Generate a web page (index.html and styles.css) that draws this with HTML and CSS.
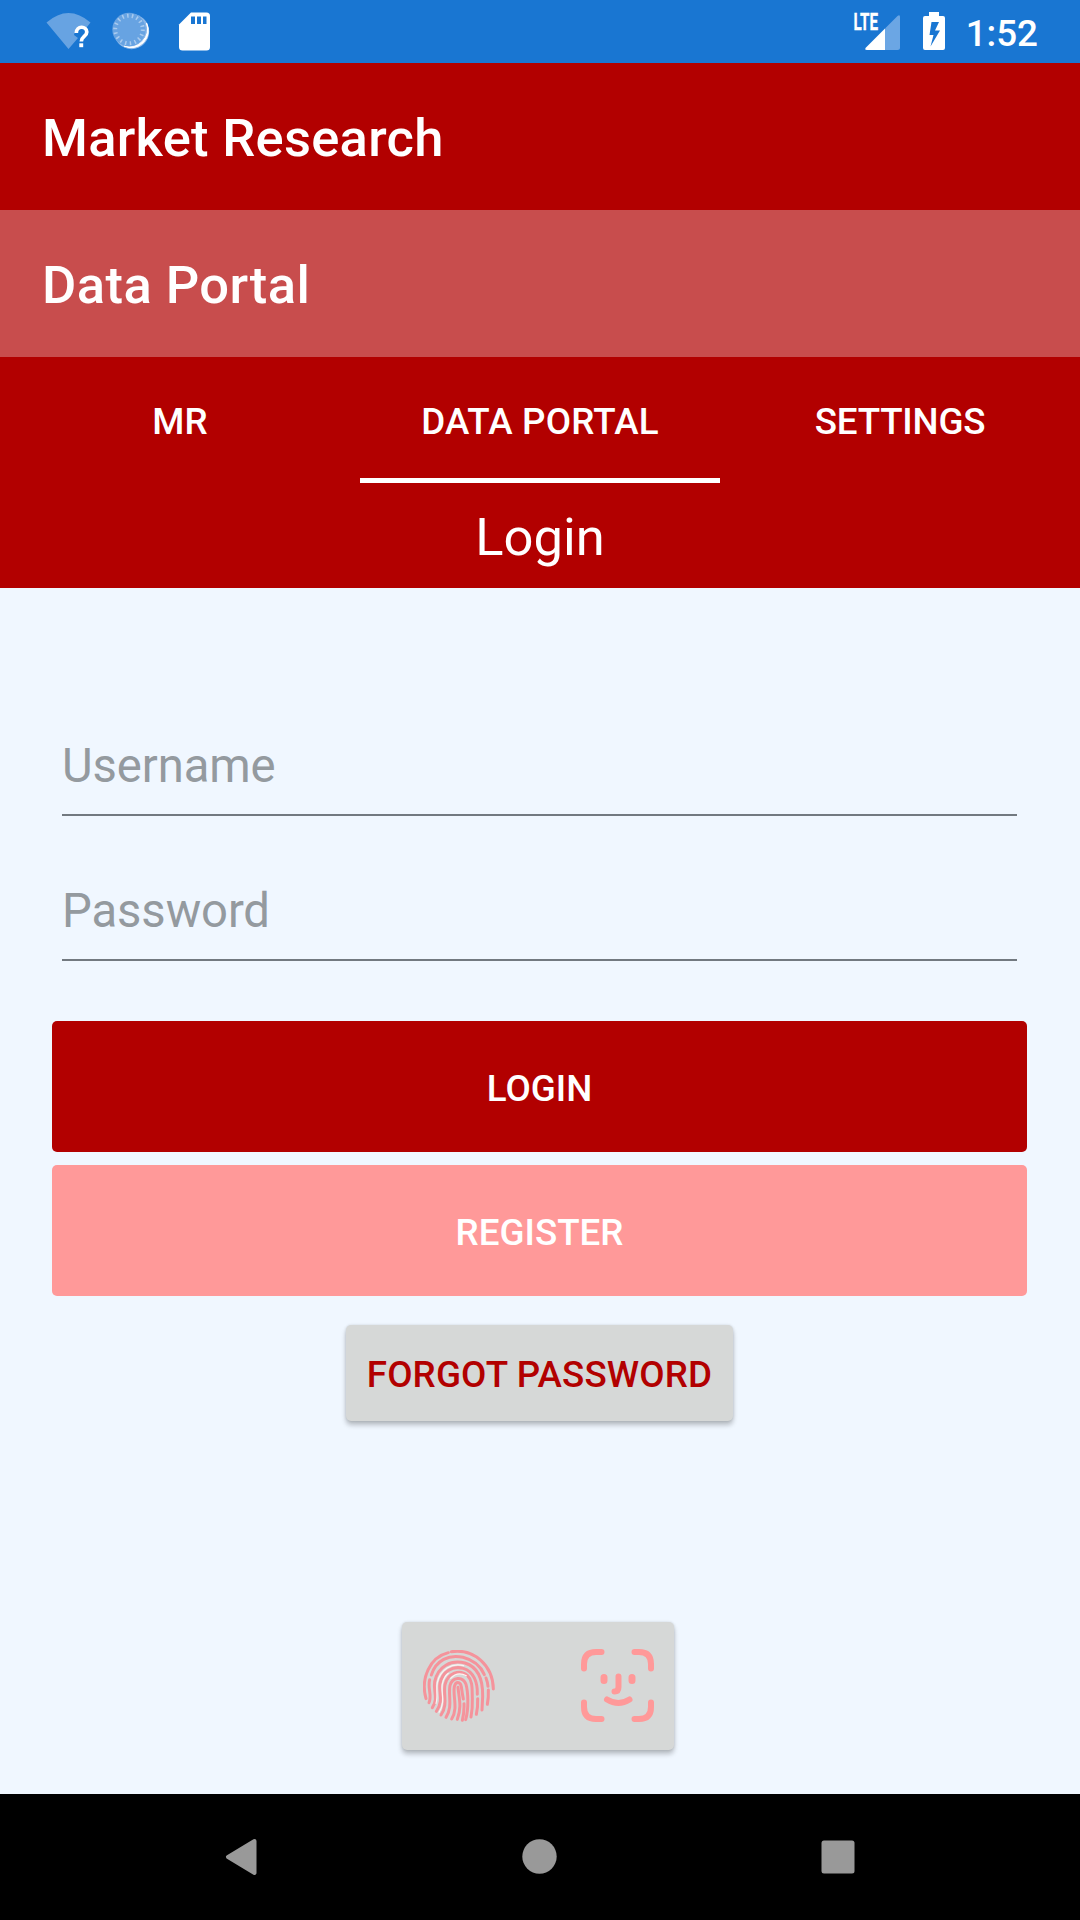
FILE: index.html
```html
<!DOCTYPE html>
<html lang="en">
<head>
<meta charset="utf-8">
<title>Market Research</title>
<link rel="stylesheet" href="styles.css">
</head>
<body>
<div class="screen">
  <div class="status">
    <svg class="status-left" viewBox="30 0 200 63" width="200" height="63">
      <path d="M46.500 22.500Q68.500 3.500 90.500 22.500L87 27Q76 23.500 74 35L78 38L68.500 49Z" fill="#67a3e2"/>
      <path d="M76.300 33C76.300 25.500 86.800 25.500 86.800 32C86.800 36.500 81.300 36.500 81.300 41.500" fill="none" stroke="#fff" stroke-width="3.700"/>
      <rect x="79.300" y="43.300" width="3.900" height="3.900" fill="#fff"/>
      <circle cx="131.500" cy="31.500" r="17.700" fill="#8db9ea"/>
      <path d="M146.500 23A17 17 0 0 1 124 46A18 18 0 0 0 146.500 23Z" fill="#fff" stroke="#fff" stroke-width="1"/>
      <circle cx="129" cy="29.500" r="16.700" fill="#67a3e2"/>
      <circle cx="129" cy="29.500" r="13.800" fill="none" stroke="#a9cbef" stroke-width="4" stroke-dasharray="1.500 3.320"/>
      <path d="M191 12.500H206.500Q210 12.500 210 16V47Q210 50.500 206.500 50.500H182.500Q179 50.500 179 47V24.500Z" fill="#fff"/>
      <path d="M191 16.500h4v7.500h-4zM197 16.500h4v7.500h-4zM203 16.500h3.500v7.500H203z" fill="#1976d2"/>
    </svg>
    <div class="status-right">
      <svg viewBox="840 0 110 63" width="110" height="63">
        <path d="M885 28.500V50H867Q864 50 866 47.500Z" fill="#fff"/>
        <path d="M896.500 17L897.500 16Q900 14 900 17V47.500Q900 50 897.500 50H885V28.500Z" fill="#6ba6e4"/>
        <text class="lte" x="853.500" y="30" textLength="24.500" lengthAdjust="spacingAndGlyphs">LTE</text>
        <path d="M929 12H939V16H943Q945 16 945 18V48Q945 50 943 50H925Q923 50 923 48V18Q923 16 925 16H929ZM931.500 22L929.500 35H933.500L930.500 46.500L940 30.500H935L939 22Z" fill="#fff" fill-rule="evenodd"/>
      </svg>
      <span class="clock">1:52</span>
    </div>
  </div>
  <header class="bar">Market Research</header>
  <div class="bar bar-light">Data Portal</div>
  <nav class="tabs">
    <a class="tab">MR</a>
    <a class="tab tab-active">DATA PORTAL</a>
    <a class="tab tab-tight">SETTINGS</a>
  </nav>
  <h1 class="heading">Login</h1>
  <main class="content">
    <form class="form">
      <input class="field" type="text" placeholder="Username">
      <input class="field" type="password" placeholder="Password">
      <button class="button" type="button">LOGIN</button>
      <button class="button button-light" type="button">REGISTER</button>
    </form>
    <button class="forgot" type="button">FORGOT PASSWORD</button>
    <button class="biometric" type="button" aria-label="Biometric login">
      <svg viewBox="36 45 216 216" width="72" height="72" fill="none" stroke="#f5939b" stroke-width="9" stroke-linecap="round">
        <path d="M45 191C28 130 56 67 112 53"/>
        <path d="M121 50C190 40 246 92 247 162"/>
        <path d="M61 120C75 76 114 57 156 67C187 75 208 91 220 119"/>
        <path d="M56 134C49 160 64 182 54 203"/>
        <path d="M225 129Q230 142 231 154M232 165Q233 188 229 208"/>
        <path d="M64 218C83 190 66 169 71 140C81 93 120 74 162 84C201 96 216 136 215 184L213 225"/>
        <path d="M76 229C99 197 82 170 87 145C95 108 125 92 157 100C188 109 200 142 199 178"/>
        <path d="M200 191Q201 217 196 238"/>
        <path d="M90 240C112 208 96 177 102 149C110 113 146 102 169 121C186 137 183 164 184 190Q185 222 180 246"/>
        <path d="M105 247C126 214 111 183 117 151C124 126 155 122 165 148C171 169 174 221 164 254"/>
        <path d="M122 252C142 220 125 184 130 155C134 138 148 139 151 155Q154 176 157 192"/>
        <path d="M141 157C144 190 153 215 139 253M159 206Q160 232 154 256"/>
        <path class="shine" d="M84 232C105 200 89 172 94 147C97 133 103 122 112 115M75 205C82 182 74 162 79 142C88 104 122 82 158 92M119 130Q139 108 166 122"/>
      </svg>
      <svg viewBox="580 1649 73 73" width="73" height="73" fill="none" stroke="#ff9999" stroke-width="6" stroke-linecap="round">
        <path d="M583 1668.500V1664Q583 1652 595 1652H600.500M633.500 1652H638Q650 1652 650 1664V1668.500M650 1702.500V1707Q650 1719 638 1719H633.500M600.500 1719H595Q583 1719 583 1707V1702.500"/>
        <path d="M603 1677.500V1680.500M631 1677.500V1680.500" stroke-width="7"/>
        <path d="M617.500 1676.500V1687Q617.500 1691.500 613.500 1691.500M606 1699.500Q617.500 1706.500 628.500 1699.500" stroke-width="6"/>
      </svg>
    </button>
  </main>
  <footer class="navbar">
    <svg viewBox="0 1794 1080 126" width="1080" height="126" fill="#999">
      <path d="M254.500 1841L228 1857L254.500 1873Z" stroke="#999" stroke-width="4" stroke-linejoin="round"/>
      <circle cx="539.500" cy="1856.500" r="17.200"/>
      <rect x="821.500" y="1840.500" width="33" height="33" rx="2.500"/>
    </svg>
  </footer>
</div>
</body>
</html>
```
FILE: styles.css
```css
* { box-sizing: border-box; }
body { margin: 0; font-family: Roboto, sans-serif; }
.screen {
  width: 1080px;
  height: 1920px;
  display: flex;
  flex-direction: column;
  background: #f0f7ff;
}
.status {
  height: 63px;
  background: #1976d2;
  display: flex;
  justify-content: space-between;
  padding: 0 42px 0 30px;
}
.status svg { display: block; }
.status-right { display: flex; gap: 16px; }
.lte {
  font: 700 23px Roboto, sans-serif;
  fill: #fff;
  stroke: #fff;
  stroke-width: .3px;
}
.clock {
  color: #fff;
  font-size: 36.750px;
  font-weight: 500;
  line-height: 43px;
  padding-top: 12px;
}
.bar {
  height: 147px;
  padding: 4px 42px 0;
  background: #b20000;
  color: #fff;
  font-size: 52.500px;
  font-weight: 500;
  letter-spacing: .27px;
  line-height: 142px;
}
.bar-light { background: #c84d4d; letter-spacing: .45px; }
.tabs {
  height: 126px;
  display: grid;
  grid-template-columns: repeat(3, 1fr);
  background: #b20000;
}
.tab {
  border-bottom: 5px solid transparent;
  padding-top: 8px;
  color: #fff;
  font-size: 36.750px;
  font-weight: 500;
  line-height: 113px;
  text-align: center;
}
.tab-active { border-color: #fff; letter-spacing: .2px; }
.tab-tight { letter-spacing: -.2px; }
.heading {
  margin: 0;
  height: 105px;
  padding-top: 4px;
  background: #b20000;
  color: #fff;
  font-size: 52.500px;
  font-weight: 400;
  line-height: 101px;
  text-align: center;
}
.content {
  flex: 1;
  display: flex;
  flex-direction: column;
  align-items: center;
  padding: 125px 1px 0 0;
}
.form {
  width: 975px;
  display: flex;
  flex-direction: column;
}
.field {
  height: 103px;
  margin: 0 10px 42px;
  padding: 4px 0 0;
  border: 0;
  border-bottom: 2px solid #727980;
  background: transparent;
  font: 400 47.250px Roboto, sans-serif;
  letter-spacing: -.1px;
  outline: 0;
}
.field::placeholder { color: #949a9f; opacity: 1; }
.button, .forgot {
  border: 0;
  font: 500 36.750px Roboto, sans-serif;
}
.button {
  height: 131px;
  margin-top: 13px;
  padding: 3px 0 0;
  border-radius: 5px;
  background: #b20000;
  color: #fff;
}
.field + .button { margin-top: 18px; }
.button-light { background: #ff9999; }
.forgot, .biometric {
  border-radius: 5px;
  background: #d6d8d7;
  box-shadow: 0 4px 5px rgba(0, 0, 0, .24), 0 0 3px rgba(0, 0, 0, .12);
}
.forgot {
  width: 387px;
  height: 96px;
  margin-top: 29px;
  padding: 3px 0 0;
  color: #b20000;
  letter-spacing: .15px;
  white-space: nowrap;
}
.biometric {
  width: 272px;
  height: 128px;
  margin: 201px 4px 0 0;
  padding: 0 20px 1px 21px;
  border: 0;
  display: flex;
  align-items: center;
  justify-content: space-between;
}
.shine { stroke: #fff2f1; stroke-width: 3.500; }
.navbar { height: 126px; background: #000; }
.navbar svg { display: block; }
```
